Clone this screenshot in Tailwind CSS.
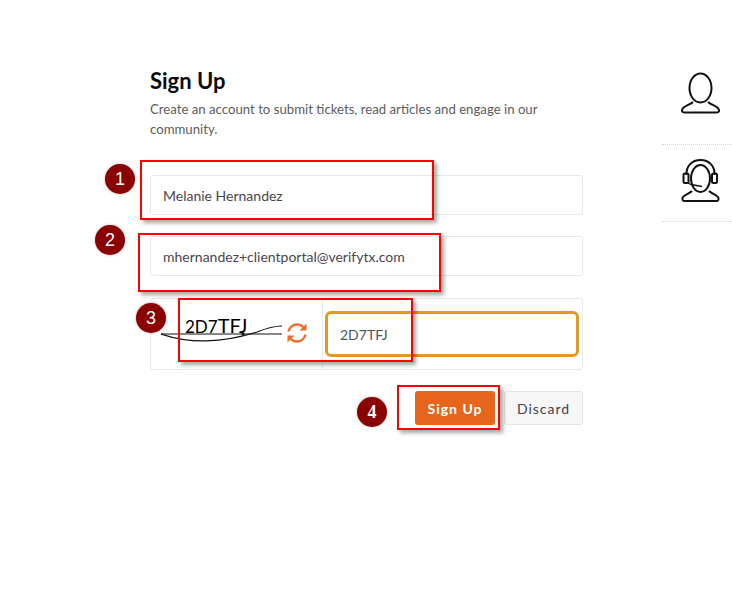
<!DOCTYPE html>
<html lang="en">
<head>
    <meta charset="UTF-8">
    <title>Sign Up</title>
    <script src="https://cdn.jsdelivr.net/npm/@tailwindcss/browser@4"></script>
</head>
<body class="bg-white font-['Lato',sans-serif]">
    <div class="relative w-[732px] h-[614px] overflow-hidden flex">
        <!-- form column -->
        <main class="w-[433px] ml-[150px] pt-[67px]">
            <h1 class="text-[22px] leading-[27px] font-bold text-[#0c0c0c]">Sign Up</h1>
            <p class="mt-[5px] text-[13.2px] leading-[20px] text-[#5c5c5c]">Create an account to submit tickets, read articles and engage in our community.</p>

            <div class="mt-[36px] h-[40px] border border-[#e8e8e8] rounded-[3px] flex items-center px-[12px] text-[14px] text-[#4a4550]">Melanie Hernandez</div>
            <div class="mt-[21px] h-[40px] border border-[#e8e8e8] rounded-[3px] flex items-center px-[12px] text-[14px] text-[#4a4550]">mhernandez+clientportal@verifytx.com</div>

            <div class="mt-[22px] h-[72px] border border-[#e8e8e8] rounded-[3px] flex">
                <div class="relative w-[172px] border-r border-[#e8e8e8] shrink-0">
                    <span class="absolute left-[34px] top-[13px] text-[17px] leading-[26px] text-black">2D7<span class="text-[20px]">TFJ</span></span>
                    <svg class="absolute left-[10px] top-[20px]" width="125" height="26" viewBox="0 0 125 26" fill="none" stroke="#111111" stroke-width="1.2">
                        <path d="M0 15H121"/>
                        <path d="M0 15C30 25 60 24 96 13C106 9 114 7 121 7"/>
                        <circle cx="82" cy="15" r="1.5" fill="#111111" stroke="none"/>
                    </svg>
                    <svg class="absolute left-[135px] top-[23px]" width="22" height="22" viewBox="0 0 22 22" fill="none" stroke="#e96f2a" stroke-width="2.4">
                        <path d="M2.5 9.5C3.5 5.500 7 2.500 11 2.500C14 2.500 16.500 4 18 6.200"/>
                        <path d="M19.500 12.500C18.500 16.500 15 19.500 11 19.500C8 19.500 5.500 18 4 15.800"/>
                        <path d="M20.500 1.500V8.500H13.500Z" fill="#e96f2a" stroke="none"/>
                        <path d="M1.500 20.500V13.500H8.500Z" fill="#e96f2a" stroke="none"/>
                    </svg>
                </div>
                <div class="flex-1 pl-[2px] pr-[3px] py-[12px]">
                    <div class="h-[46px] border-[3px] border-[#e09a24] rounded-[6px] flex items-center pl-[12px] text-[14px] text-[#4a5560]">2D7TFJ</div>
                </div>
            </div>

            <div class="mt-[21px] flex justify-end gap-[9px]">
                <button class="w-[80px] h-[34px] bg-[#e6651a] rounded-[3px] text-white text-[14px] font-bold tracking-[1px]">Sign Up</button>
                <button class="w-[79px] h-[34px] bg-[#f7f7f7] border border-[#e4e4e4] rounded-[3px] text-[#444050] text-[14px] tracking-[1px]">Discard</button>
            </div>
        </main>

        <!-- right icon rail -->
        <aside class="ml-[79px] w-[70px] pt-[67px] flex flex-col">
            <div class="h-[78px] border-b border-dotted border-[#d5d5d5] pl-[18px] pt-[4px]">
                <svg width="44" height="44" viewBox="0 0 44 44" fill="none" stroke="#111111" stroke-width="2">
                    <ellipse cx="20.500" cy="17" rx="11" ry="14.500"/>
                    <path d="M13 31C10 34 3 35 2 39C1.500 41 3 41.500 5 41.500H36C38 41.500 39.500 41 39 39C38 35 31 34 28 31"/>
                </svg>
            </div>
            <div class="h-[77px] border-b border-dotted border-[#d5d5d5] pl-[18px] pt-[13px]">
                <svg width="44" height="44" viewBox="0 0 44 44" fill="none" stroke="#111111" stroke-width="2">
                    <ellipse cx="20.500" cy="20.500" rx="9.500" ry="13.500"/>
                    <path d="M6.500 17C6 8 12 2 20.500 2C29 2 35 8 34.500 17"/>
                    <rect x="3.500" y="15.500" width="5" height="9.500" rx="1.500"/>
                    <rect x="32" y="15.500" width="5" height="9.500" rx="1.500"/>
                    <path d="M8 25C10 26.500 12 27 14 27L22 28.500" stroke-width="1.500"/>
                    <path d="M12 33C9 36 3 37 2.500 40C2 43 3.500 43 6 43H35C37.500 43 39 43 38.500 40C38 37 32 36 29 33"/>
                </svg>
            </div>
        </aside>

        <!-- annotation overlays -->
        <div class="absolute left-[140px] top-[160px] w-[294px] h-[60px] border-[2.5px] border-[#ff0000] shadow-[3px_3px_4px_rgba(0,0,0,0.35)]"></div>
        <div class="absolute left-[138px] top-[233px] w-[303px] h-[59px] border-[2.5px] border-[#ff0000] shadow-[3px_3px_4px_rgba(0,0,0,0.35)]"></div>
        <div class="absolute left-[178px] top-[298px] w-[235px] h-[64px] border-[2.5px] border-[#ff0000] shadow-[3px_3px_4px_rgba(0,0,0,0.35)]"></div>
        <div class="absolute left-[397px] top-[385px] w-[103px] h-[45px] border-[2.5px] border-[#ff0000] shadow-[3px_3px_4px_rgba(0,0,0,0.35)]"></div>

        <div class="absolute left-[105px] top-[164px] w-[30px] h-[30px] rounded-full bg-[#8b0000] text-white text-[18px] flex items-center justify-center font-['Liberation_Sans',sans-serif] shadow-[0_0_3px_rgba(0,0,0,0.3)]">1</div>
        <div class="absolute left-[95px] top-[225px] w-[30px] h-[30px] rounded-full bg-[#8b0000] text-white text-[18px] flex items-center justify-center font-['Liberation_Sans',sans-serif] shadow-[0_0_3px_rgba(0,0,0,0.3)]">2</div>
        <div class="absolute left-[136px] top-[303px] w-[30px] h-[30px] rounded-full bg-[#8b0000] text-white text-[18px] flex items-center justify-center font-['Liberation_Sans',sans-serif] shadow-[0_0_3px_rgba(0,0,0,0.3)]">3</div>
        <div class="absolute left-[357px] top-[397px] w-[30px] h-[30px] rounded-full bg-[#8b0000] text-white text-[18px] font-bold flex items-center justify-center font-['Liberation_Serif',serif] shadow-[0_0_3px_rgba(0,0,0,0.3)]">4</div>
    </div>
</body>
</html>
